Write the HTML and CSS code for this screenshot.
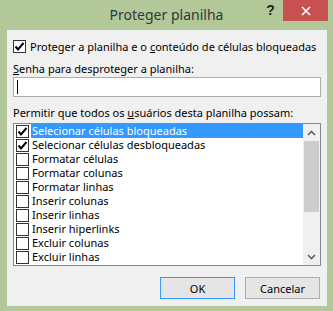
FILE: index.html
```html
<!DOCTYPE html>
<html lang="pt">
<head>
  <meta charset="UTF-8">
  <title>Proteger planilha</title>
  <link rel="stylesheet" href="styles.css">
</head>
<body>
  <div class="window">
    <div class="titlebar">
      <div class="title">Proteger planilha</div>
      <div class="help">?</div>
      <div class="close">
        <svg width="10" height="10" viewBox="0 0 10 10"><path d="M1 1 L9 9 M9 1 L1 9" stroke="#fff" stroke-width="1.6"/></svg>
      </div>
    </div>

    <div class="panel">
      <div class="check-row">
        <span class="box checked"><svg width="11" height="11" viewBox="0 0 11 11"><path d="M1.5 5.5 L4 8.5 L9.5 2" stroke="#000" stroke-width="2" fill="none"/></svg></span>
        <span>Proteger a planilha e o <u>c</u>onteúdo de células bloqueadas</span>
      </div>

      <div class="label"><u>S</u>enha para desproteger a planilha:</div>
      <div class="input"><span class="caret"></span></div>

      <div class="label perm">Permitir que todos os <u>u</u>suários desta planilha possam:</div>
      <div class="list">
        <div class="items">
          <div class="item"><span class="box checked"><svg width="11" height="11" viewBox="0 0 11 11"><path d="M1.5 5.5 L4 8.5 L9.5 2" stroke="#000" stroke-width="2" fill="none"/></svg></span><span class="text selected">Selecionar células bloqueadas</span></div>
          <div class="item"><span class="box checked"><svg width="11" height="11" viewBox="0 0 11 11"><path d="M1.5 5.5 L4 8.5 L9.5 2" stroke="#000" stroke-width="2" fill="none"/></svg></span><span class="text">Selecionar células desbloqueadas</span></div>
          <div class="item"><span class="box"></span><span class="text">Formatar células</span></div>
          <div class="item"><span class="box"></span><span class="text">Formatar colunas</span></div>
          <div class="item"><span class="box"></span><span class="text">Formatar linhas</span></div>
          <div class="item"><span class="box"></span><span class="text">Inserir colunas</span></div>
          <div class="item"><span class="box"></span><span class="text">Inserir linhas</span></div>
          <div class="item"><span class="box"></span><span class="text">Inserir hiperlinks</span></div>
          <div class="item"><span class="box"></span><span class="text">Excluir colunas</span></div>
          <div class="item"><span class="box"></span><span class="text">Excluir linhas</span></div>
        </div>
        <div class="scrollbar">
          <div class="arrow">
            <svg width="9" height="6" viewBox="0 0 9 6"><path d="M1 5 L4.5 1.5 L8 5" stroke="#606060" stroke-width="1.6" fill="none"/></svg>
          </div>
          <div class="track"><div class="thumb"></div></div>
          <div class="arrow">
            <svg width="9" height="6" viewBox="0 0 9 6"><path d="M1 1 L4.5 4.5 L8 1" stroke="#606060" stroke-width="1.6" fill="none"/></svg>
          </div>
        </div>
      </div>

      <div class="buttons">
        <button class="btn default">OK</button>
        <button class="btn">Cancelar</button>
      </div>
    </div>
  </div>
</body>
</html>
```

FILE: styles.css
```css
body {
  margin: 0;
  background: #b3c898;
  font-family: "Noto Sans", "DejaVu Sans", sans-serif;
  font-size: 11px;
  color: #000;
}
.window {
  width: 333px;
  height: 311px;
  background: #b3c898;
}
.titlebar {
  display: flex;
  height: 30px;
}
.title {
  flex: 1;
  padding-left: 75px;
  text-align: center;
  font-size: 14px;
  line-height: 30px;
  color: #2f3a36;
}
.help {
  width: 25px;
  padding-top: 2px;
  text-align: center;
  font-family: "Liberation Sans", sans-serif;
  font-weight: bold;
  font-size: 14px;
  color: #222;
}
.close {
  width: 45px;
  height: 21px;
  margin-right: 5px;
  background: #c75050;
  display: flex;
  align-items: center;
  justify-content: center;
}
.panel {
  margin: 0 6px 0 7px;
  height: 276px;
  padding: 9px 6px 0 6px;
  box-sizing: border-box;
  background: #f0f0f0;
}
.check-row {
  display: flex;
  align-items: center;
  height: 14px;
  gap: 4px;
  white-space: nowrap;
}
.box {
  width: 11px;
  height: 11px;
  border: 1px solid #333;
  background: #fff;
  flex: none;
  display: flex;
}
.label {
  margin-top: 8px;
  line-height: 15px;
  white-space: nowrap;
}
.input {
  margin-top: 1px;
  height: 18px;
  border: 1px solid #ababab;
  background: #fff;
  display: flex;
  align-items: center;
}
.caret {
  margin-left: 3px;
  width: 1px;
  height: 14px;
  background: #000;
}
.perm {
  margin-top: 8px;
}
.list {
  margin-top: 3px;
  height: 141px;
  border: 1px solid #828790;
  background: #fff;
  display: flex;
}
.items {
  flex: 1;
  padding-left: 2px;
}
.item {
  display: flex;
  align-items: center;
  height: 14px;
  white-space: nowrap;
}
.item .box {
  margin-right: 2px;
}
.text {
  flex: 1;
  padding-left: 1px;
  line-height: 14px;
}
.selected {
  background: #3399ff;
  color: #fff;
}
.scrollbar {
  width: 17px;
  background: #f0f0f0;
  display: flex;
  flex-direction: column;
}
.arrow {
  height: 17px;
  display: flex;
  align-items: center;
  justify-content: center;
}
.track {
  flex: 1;
}
.thumb {
  margin: 0 1px;
  height: 71px;
  background: #cdcdcd;
}
.buttons {
  display: flex;
  justify-content: flex-end;
  gap: 10px;
  margin-top: 11px;
  padding-right: 1px;
}
.btn {
  width: 75px;
  height: 22px;
  font-family: inherit;
  font-size: 11px;
  background: #e5e5e5;
  border: 1px solid #acacac;
  color: #000;
  padding: 0;
}
.btn.default {
  border-color: #3399ff;
}
```
